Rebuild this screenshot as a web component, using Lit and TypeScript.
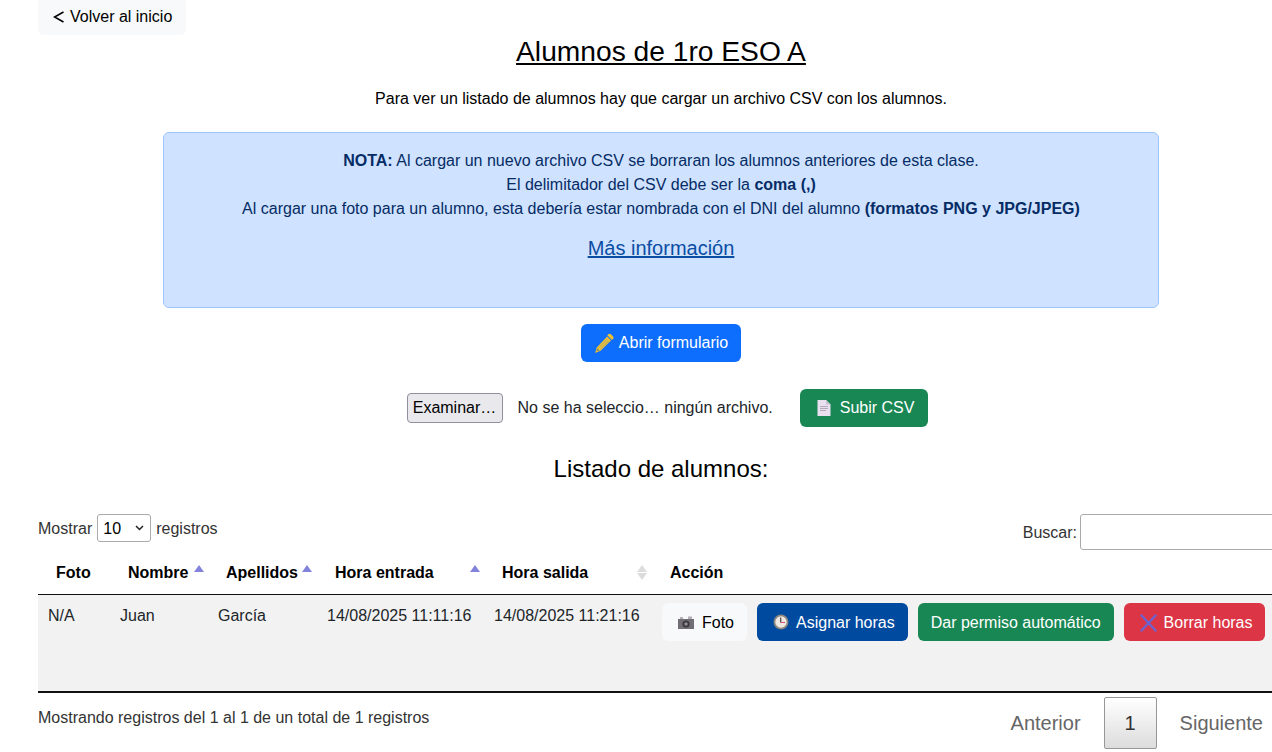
import { LitElement, html, css } from 'lit';
import { customElement } from 'lit/decorators.js';

const pencil = html`<svg class="ico" width="20" height="21" viewBox="0 0 20 21"><path d="M13.200 3.600l3.800 3.800L6.600 17.800 1 20l2-5.800z" fill="#f4c22e"/><path d="M14.200 1.300a2 2 0 0 1 2.700 0l2 2a2 2 0 0 1 0 2.700l-1 1-4.600-4.700z" fill="#f4c22e"/><path d="M4.800 14.800l8.400-8.400M6.400 16.200l8.400-8.400" stroke="#0d6efd" stroke-width=".7" opacity=".55"/><path d="M3.400 15.300l2.300 2.300-3.200 1z" fill="#1f5fb8" opacity=".55"/></svg>`;
const doc = html`<svg class="ico" width="14" height="16" viewBox="0 0 14 16"><path d="M0.500 0h8.500l4.500 4.500V16H.5z" fill="#e8e0ee"/><path d="M9 0l4.500 4.500H9z" fill="#c8bfd0"/><path d="M3 6.500h8M3 8.500h8M3 10.500h6" stroke="#b5aabd"/></svg>`;
const camera = html`<svg class="ico cam" width="16" height="13" viewBox="0 0 16 13"><path d="M0 3h16v10H0z" fill="#736e76"/><path d="M2 1h3v2H2zM10 0.500h4V3h-4z" fill="#b4afb8"/><circle cx="8" cy="8" r="3.600" fill="#3a373d"/><circle cx="8" cy="8" r="1.800" fill="#8f8a94"/></svg>`;
const clock = html`<svg class="ico clock" width="16" height="16" viewBox="0 0 16 16"><circle cx="8" cy="8" r="7.500" fill="#8f8880"/><circle cx="8" cy="8" r="5.700" fill="#f0e9e2"/><path d="M7.700 3.500V8.500" stroke="#4a4048" stroke-width="1.200"/><path d="M7.700 8.500H12" stroke="#d8527c" stroke-width="1"/></svg>`;
const cross = html`<svg class="ico" width="17" height="18" viewBox="0 0 17 18"><path d="M1.500 1.500l14 15M15.500 1.500l-14 15" stroke="#6e62cf" stroke-width="2.400" stroke-linecap="round"/></svg>`;

@customElement('app-root')
export class AppRoot extends LitElement {
  static styles = css`
    :host {
      display: block;
      width: 1272px;
      height: 752px;
      overflow: hidden;
      font-family: 'Liberation Sans', Arial, sans-serif;
      font-size: 16px;
      line-height: 24px;
      color: #212529;
      background: #fff;
    }
    .page {
      width: 1246px;
      margin-left: 38px;
      margin-top: -3px;
    }
    .btn {
      display: inline-flex;
      align-items: center;
      height: 38px;
      box-sizing: border-box;
      padding: 0 12px;
      border-radius: 6px;
      white-space: nowrap;
    }
    .ico { flex: none; }
    .light { background: #f8f9fa; color: #000; }
    .back { padding: 2px 14px 0 15px; }
    .back svg { margin-right: 6px; }
    .primary { background: #0d6efd; color: #fff; }
    .success { background: #198754; color: #fff; }
    .navy { background: #004a9f; color: #fff; }
    .danger { background: #dc3545; color: #fff; }
    h1 {
      margin: -1px 0 0;
      font-size: 28.200px;
      line-height: 34px;
      font-weight: 400;
      color: #000;
      text-align: center;
      text-decoration: underline;
    }
    .lead {
      margin: 19px 0 0;
      text-align: center;
      color: #000;
    }
    .alert {
      box-sizing: border-box;
      width: 996px;
      height: 176px;
      margin: 21px auto 0;
      padding: 16px;
      background: #cfe2ff;
      border: 1px solid #9ec5fe;
      border-radius: 6px;
      color: #052c65;
      text-align: center;
    }
    .alert a {
      display: block;
      margin-top: 12px;
      font-size: 20px;
      line-height: 30px;
      color: #0a4ea3;
      text-decoration: underline;
    }
    .center { display: flex; justify-content: center; margin-top: 16px; }
    .center .btn { padding: 0 13px; gap: 5px; }
    .files {
      display: flex;
      align-items: center;
      justify-content: center;
      margin: 27px 0 0 13px;
      color: #212529;
    }
    .fake-btn {
      box-sizing: border-box;
      width: 96px;
      height: 30px;
      border: 1px solid #8f8f9d;
      border-radius: 4px;
      background: #e9e9ed;
      color: #000;
      text-align: center;
      line-height: 28px;
    }
    .fname { margin: 0 27px 0 15px; }
    .files .btn { gap: 9px; padding: 0 14px 0 17px; }
    h2 {
      margin: 27px 0 0;
      font-size: 24px;
      line-height: 30px;
      font-weight: 400;
      color: #000;
      text-align: center;
    }
    .controls {
      display: flex;
      justify-content: space-between;
      margin-top: 30px;
      color: #333;
    }
    .len { display: flex; align-items: center; height: 28px; gap: 5px; }
    .len .txt, .search .txt { padding-top: 2px; }
    .select {
      box-sizing: border-box;
      width: 54px;
      height: 28px;
      padding: 2px 0 0 5px;
      border: 1px solid #aaa;
      border-radius: 3px;
      background: #fff;
      color: #000;
      display: flex;
      align-items: center;
      justify-content: space-between;
    }
    .select svg { margin: -2px 6px 0 0; }
    .search { display: flex; align-items: center; gap: 3px; height: 36px; }
    .input {
      box-sizing: border-box;
      width: 204px;
      height: 36px;
      border: 1px solid #aaa;
      border-radius: 3px;
      background: #fff;
    }
    table {
      border-collapse: collapse;
      table-layout: fixed;
      width: 1246px;
    }
    th {
      position: relative;
      height: 44px;
      box-sizing: border-box;
      padding: 2px 0 0 18px;
      border-bottom: 1px solid #111;
      font-weight: 700;
      color: #000;
      text-align: left;
    }
    td {
      height: 98px;
      box-sizing: border-box;
      padding: 9px 0 0 10px;
      background: #f2f2f2;
      border-bottom: 2px solid #111;
      color: #212529;
      vertical-align: top;
      white-space: nowrap;
    }
    td.act { padding-top: 8px; }
    .up, .down {
      position: absolute;
      width: 0;
      height: 0;
      border-left: 5px solid transparent;
      border-right: 5px solid transparent;
    }
    .up { top: 15px; border-bottom: 7px solid #8383dc; }
    .up.off { border-bottom-color: #dcdcdc; }
    .down { top: 23px; border-top: 7px solid #dcdcdc; }
    .actions { display: flex; gap: 10px; }
    .actions .btn { padding: 2px 13px 0 16px; gap: 7px; }
    .actions .plain { padding: 2px 13px 0; }
    .actions .light { padding: 2px 13px 0 16px; gap: 8px; }
    .actions .danger { padding: 2px 12px 0 16px; }
    .clock { margin-top: -2px; }
    .foot {
      display: flex;
      justify-content: space-between;
      margin-top: 4px;
    }
    .info { color: #333; padding-top: 9px; }
    .pager { display: flex; font-size: 20px; line-height: 30px; color: #666; }
    .pager span { padding: 11px 20px; }
    .pager span:last-child { padding-right: 21px; }
    .pager .cur {
      box-sizing: border-box;
      width: 53px;
      height: 52px;
      padding: 10px 0;
      margin: 0 3px;
      border: 1px solid #979797;
      border-radius: 2px;
      background: linear-gradient(#fff, #dcdcdc);
      color: #333;
      text-align: center;
    }
  `;

  render() {
    return html`
      <div class="page">
        <div class="btn light back">
          <svg width="11" height="12" viewBox="0 0 11 12"><path d="M10.500 1L1.500 6l9 5" fill="none" stroke="#000" stroke-width="1.500"/></svg>
          Volver al inicio
        </div>
        <h1>Alumnos de 1ro ESO A</h1>
        <p class="lead">Para ver un listado de alumnos hay que cargar un archivo CSV con los alumnos.</p>
        <div class="alert">
          <div><b>NOTA:</b> Al cargar un nuevo archivo CSV se borraran los alumnos anteriores de esta clase.</div>
          <div>El delimitador del CSV debe ser la <b>coma (,)</b></div>
          <div>Al cargar una foto para un alumno, esta debería estar nombrada con el DNI del alumno <b>(formatos PNG y JPG/JPEG)</b></div>
          <a>Más información</a>
        </div>
        <div class="center"><div class="btn primary">${pencil}Abrir formulario</div></div>
        <div class="files">
          <div class="fake-btn">Examinar…</div>
          <div class="fname">No se ha seleccio… ningún archivo.</div>
          <div class="btn success">${doc}Subir CSV</div>
        </div>
        <h2>Listado de alumnos:</h2>
        <div class="controls">
          <div class="len">
            <span class="txt">Mostrar</span>
            <div class="select">10
              <svg width="9" height="6" viewBox="0 0 9 6"><path d="M1 1l3.500 3.500L8 1" fill="none" stroke="#222" stroke-width="1.500"/></svg>
            </div>
            <span class="txt">registros</span>
          </div>
          <div class="search"><span class="txt">Buscar:</span><div class="input"></div></div>
        </div>
        <table>
          <colgroup>
            <col style="width:72px" /><col style="width:98px" /><col style="width:109px" />
            <col style="width:167px" /><col style="width:168px" /><col />
          </colgroup>
          <thead>
            <tr>
              <th>Foto</th>
              <th>Nombre<i class="up" style="left:84px"></i></th>
              <th>Apellidos<i class="up" style="left:94px"></i></th>
              <th>Hora entrada<i class="up" style="left:153px"></i></th>
              <th>Hora salida<i class="up off" style="left:153px"></i><i class="down" style="left:153px"></i></th>
              <th>Acción</th>
            </tr>
          </thead>
          <tbody>
            <tr>
              <td>N/A</td>
              <td>Juan</td>
              <td>García</td>
              <td>14/08/2025 11:11:16</td>
              <td>14/08/2025 11:21:16</td>
              <td class="act">
                <div class="actions">
                  <div class="btn light">${camera}Foto</div>
                  <div class="btn navy">${clock}Asignar horas</div>
                  <div class="btn success plain">Dar permiso automático</div>
                  <div class="btn danger">${cross}Borrar horas</div>
                </div>
              </td>
            </tr>
          </tbody>
        </table>
        <div class="foot">
          <div class="info">Mostrando registros del 1 al 1 de un total de 1 registros</div>
          <div class="pager"><span>Anterior</span><span class="cur">1</span><span>Siguiente</span></div>
        </div>
      </div>
    `;
  }
}
